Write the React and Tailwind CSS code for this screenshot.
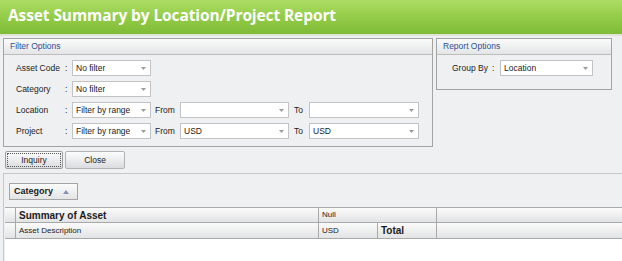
import React from 'react';

// Small grey drop-down arrow used in the combo boxes
const Caret = () => (
  <svg width="5" height="3" viewBox="0 0 5 3" className="shrink-0">
    <path d="M0 0H5L2.5 3Z" fill="#9b9b9b" />
  </svg>
);

const Combo = ({ value = '', className = '' }) => (
  <div
    className={`h-[16px] flex items-center justify-between bg-white
                border border-[#c3c3c3] pl-[3px] pr-[4px] ${className}`}
  >
    <span className="truncate">{value}</span>
    <Caret />
  </div>
);

const GroupBox = ({ title, className = '', children }) => (
  <div className={`border border-[#a3a3a3] flex flex-col ${className}`}>
    <div
      className="h-[16px] shrink-0 flex items-center pl-[6px]
                 bg-gradient-to-b from-[#fbfbfb] to-[#e4e5e6]
                 border-b border-[#bdbdbd] text-[#2c4f96]"
    >
      {title}
    </div>
    {children}
  </div>
);

const FilterRow = ({ label, mode, range, from = '', to = '' }) => (
  <div className="h-[16px] flex items-center">
    <span className="w-[61px] pl-[12px]">{label}</span>
    <span className="w-[7px]">:</span>
    <Combo value={mode} className="w-[79px]" />
    {range && (
      <>
        <span className="w-[29px] pl-[4px]">From</span>
        <Combo value={from} className="w-[109px]" />
        <span className="w-[20px] pl-[5px]">To</span>
        <Combo value={to} className="w-[110px]" />
      </>
    )}
  </div>
);

const cell =
  'h-full flex items-center border-r border-[#a9a9a9] bg-gradient-to-b from-[#fbfbfb] to-[#e2e3e4]';

const App = () => {
  return (
    <div
      className="w-[622px] h-[261px] overflow-hidden flex flex-col bg-[#eff0f1]
                 font-['Liberation_Sans',Arial,sans-serif] text-[8.5px] text-[#1b1b1b]"
    >
      {/* Title bar */}
      <div
        className="h-[36px] shrink-0 flex items-center pl-[8px] pb-[2px]
                   bg-gradient-to-b from-[#acdd63] via-[#94cc48] to-[#7fbb36]
                   border-b-[2px] border-[#dfe3da]"
      >
        <h1 className="font-['Open_Sans',sans-serif] font-bold text-[15.5px] text-white tracking-[-0.1px]">
          Asset Summary by Location/Project Report
        </h1>
      </div>

      {/* Option panels */}
      <div className="flex items-start gap-[3px] pl-[3px] pt-[2px]">
        <GroupBox title="Filter Options" className="w-[430px] h-[109px]">
          <div className="flex flex-col gap-[5px] pt-[5px]">
            <FilterRow label="Asset Code" mode="No filter" />
            <FilterRow label="Category" mode="No filter" />
            <FilterRow label="Location" mode="Filter by range" range />
            <FilterRow label="Project" mode="Filter by range" range from="USD" to="USD" />
          </div>
        </GroupBox>

        <GroupBox title="Report Options" className="w-[176px] h-[52px]">
          <div className="flex items-center pt-[5px]">
            <span className="w-[55px] pl-[15px]">Group By</span>
            <span className="w-[8px]">:</span>
            <Combo value="Location" className="w-[93px]" />
          </div>
        </GroupBox>
      </div>

      {/* Buttons */}
      <div className="flex gap-[2px] ml-[5px] mt-[4px]">
        <button
          className="w-[58px] h-[18px] rounded-[2px] border border-[#9d9d9d]
                     bg-gradient-to-b from-[#fdfdfd] to-[#dadcdf]
                     outline outline-dotted outline-[#555] outline-offset-[-3px]"
        >
          Inquiry
        </button>
        <button
          className="w-[60px] h-[18px] rounded-[2px] border border-[#b3b3b3]
                     bg-gradient-to-b from-[#fdfdfd] to-[#dadcdf]"
        >
          Close
        </button>
      </div>

      {/* Grid */}
      <div className="flex-1 flex flex-col mt-[4px] ml-[3px] border-t border-l border-[#c6c7c8]">
        <div className="h-[32px] shrink-0 pl-[5px] pt-[9px]">
          <div
            className="w-[69px] h-[17px] flex items-center justify-between pl-[4px] pr-[8px]
                       border border-[#a5a5a5] bg-gradient-to-b from-[#fbfbfb] to-[#e3e4e5]
                       font-bold text-[9px]"
          >
            Category
            <svg width="6" height="4" viewBox="0 0 6 4">
              <path d="M0 4H6L3 0Z" fill="#8791b4" />
            </svg>
          </div>
        </div>

        <div className="flex-1 flex flex-col ml-[1px] mt-[1px] bg-white">
          <div className="h-[16px] flex border-y border-[#a9a9a9]">
            <div className={`${cell} w-[11px]`} />
            <div className={`${cell} w-[303px] pl-[3px] font-bold text-[10px]`}>Summary of Asset</div>
            <div className={`${cell} w-[118px] pl-[3px] text-[8px]`}>Null</div>
            <div className={`${cell} flex-1 border-r-0`} />
          </div>
          <div className="h-[16px] flex border-b border-[#a9a9a9]">
            <div className={`${cell} w-[11px]`} />
            <div className={`${cell} w-[303px] pl-[3px] text-[8px]`}>Asset Description</div>
            <div className={`${cell} w-[59px] pl-[3px] text-[8px]`}>USD</div>
            <div className={`${cell} w-[59px] pl-[3px] font-bold text-[10px]`}>Total</div>
            <div className={`${cell} flex-1 border-r-0`} />
          </div>
        </div>
      </div>
    </div>
  );
};

export default App;
